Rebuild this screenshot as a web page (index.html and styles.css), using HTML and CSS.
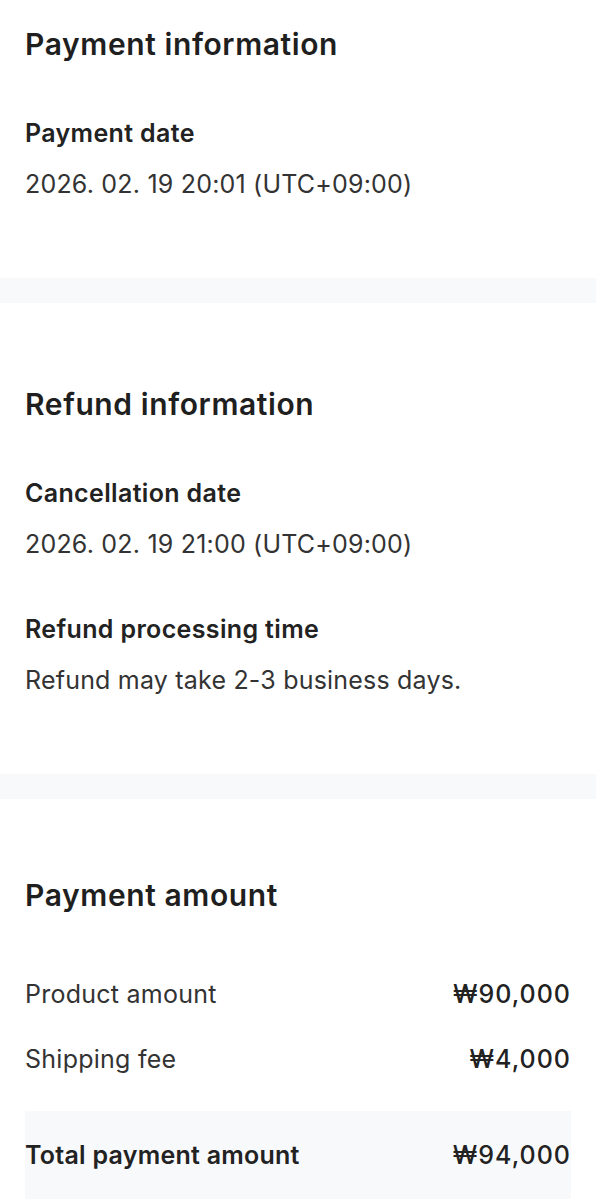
FILE: index.html
```html
<!DOCTYPE html>
<html lang="en">
<head>
  <meta charset="UTF-8">
  <title>Payment details</title>
  <link rel="stylesheet" href="styles.css">
</head>
<body>
<section class="info-section first">
  <h2 class="section-title">Payment information</h2>
  <div class="info-item">
    <h3 class="info-label">Payment date</h3>
    <p class="info-value">2026. 02. 19 20:01 (UTC+09:00)</p>
  </div>
</section>

<div class="divider"></div>

<section class="info-section">
  <h2 class="section-title">Refund information</h2>
  <div class="info-item">
    <h3 class="info-label">Cancellation date</h3>
    <p class="info-value">2026. 02. 19 21:00 (UTC+09:00)</p>
  </div>
  <div class="info-item">
    <h3 class="info-label">Refund processing time</h3>
    <p class="info-value">Refund may take 2-3 business days.</p>
  </div>
</section>

<div class="divider"></div>

<section class="info-section amount">
  <h2 class="section-title">Payment amount</h2>
  <div class="amount-list">
    <div class="amount-row">
      <span class="amount-name">Product amount</span>
      <span class="amount-price">₩90,000</span>
    </div>
    <div class="amount-row">
      <span class="amount-name">Shipping fee</span>
      <span class="amount-price">₩4,000</span>
    </div>
  </div>
  <div class="amount-total">
    <span class="total-name">Total payment amount</span>
    <span class="amount-price">₩94,000</span>
  </div>
</section>
</body>
</html>
```

FILE: styles.css
```css
body {
  margin: 0;
  font-family: Inter, "Noto Sans", sans-serif;
  color: #222;
  background: #fff;
}
h2, h3, p {
  margin: 0;
}
.info-section {
  padding: 81px 25px 78px;
}
.info-section.first {
  padding-top: 24px;
}
.info-section.amount {
  padding-top: 76px;
  padding-bottom: 0;
}
.section-title {
  font-size: 30px;
  line-height: 40px;
  font-weight: 600;
  letter-spacing: 0.6px;
  color: #1f1f1f;
}
.info-item {
  margin-top: 53px;
}
.info-label {
  font-size: 25px;
  line-height: 32px;
  font-weight: 600;
  letter-spacing: 0.35px;
  color: #222;
}
.info-value {
  margin-top: 19px;
  font-size: 25px;
  line-height: 32px;
  letter-spacing: 0.2px;
  color: #333;
}
.divider {
  height: 25px;
  background: #f8f9fb;
}
.amount-list {
  margin-top: 63px;
  display: flex;
  flex-direction: column;
  gap: 33px;
}
.amount-row, .amount-total {
  display: flex;
  justify-content: space-between;
  align-items: center;
  font-size: 25px;
  line-height: 32px;
  letter-spacing: 0.25px;
}
.amount-name {
  color: #333;
}
.amount-price {
  font-weight: 500;
  letter-spacing: 1px;
  color: #222;
}
.amount-total {
  margin-top: 36px;
  padding: 28px 0 40px;
  background: #f8f9fb;
}
.total-name {
  font-weight: 600;
}
```
